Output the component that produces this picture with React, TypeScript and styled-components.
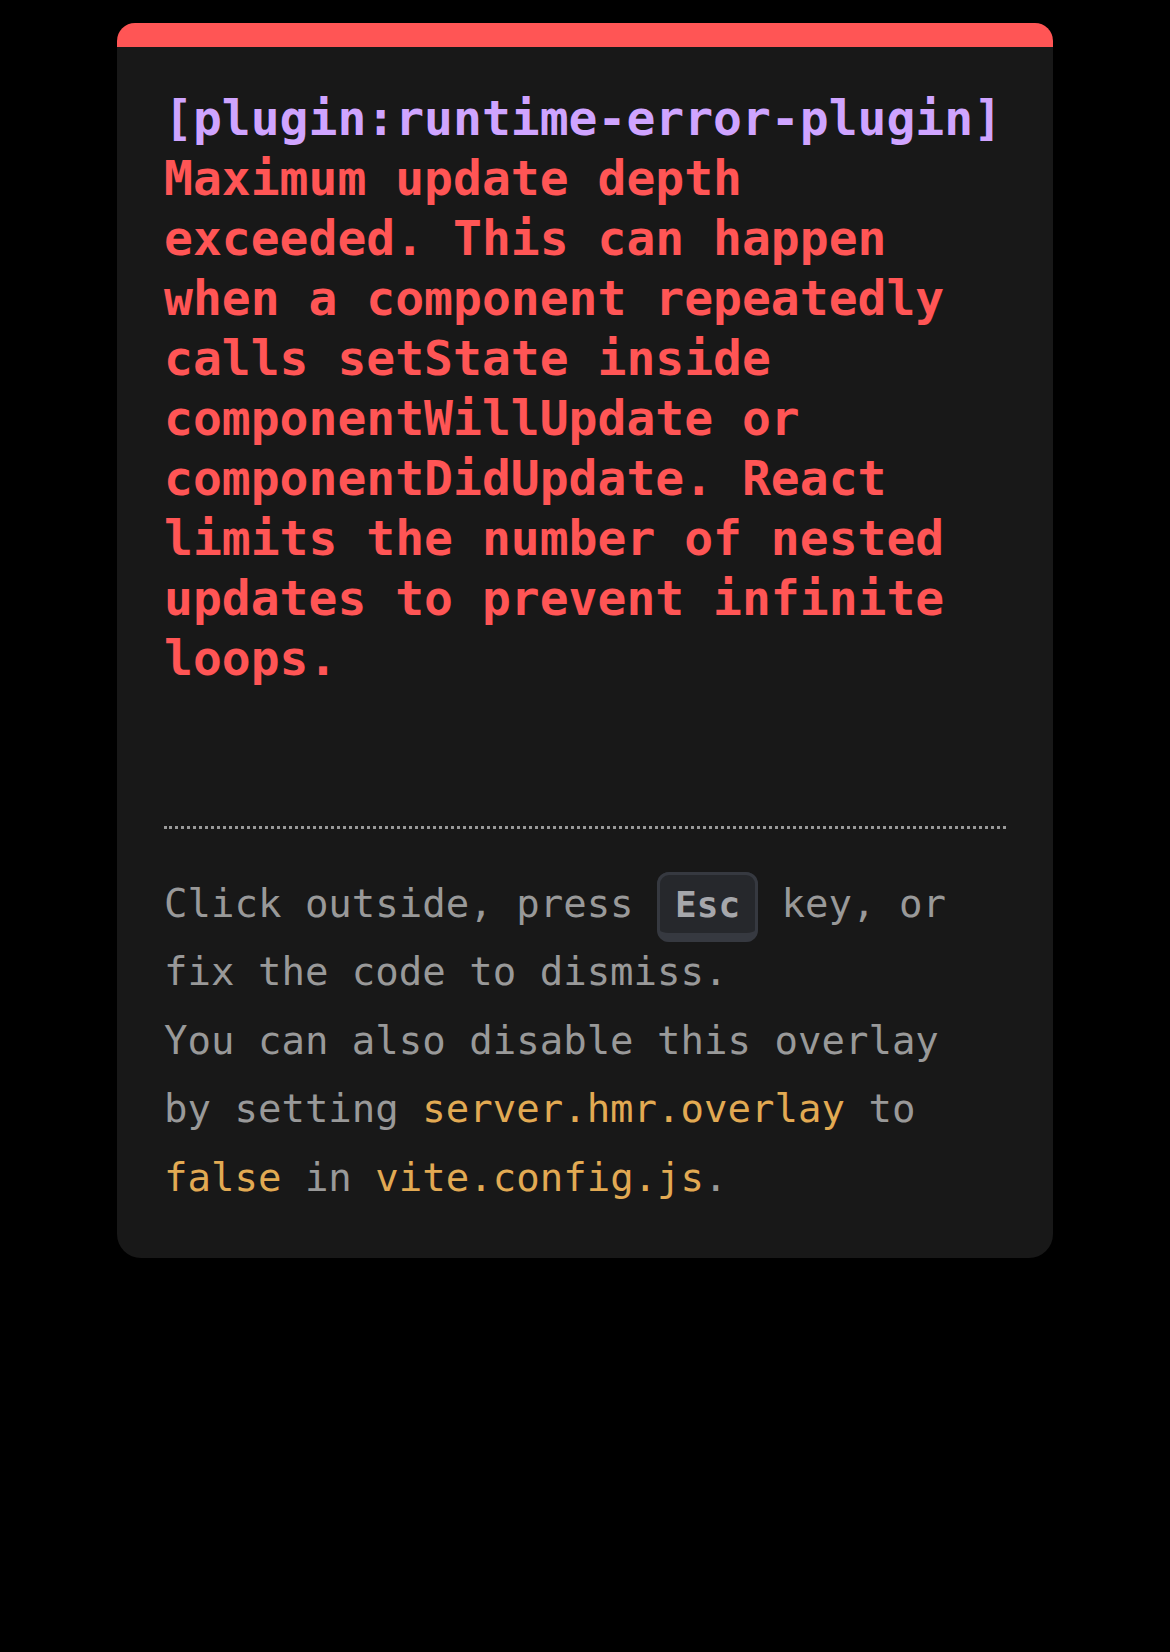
import styled, { createGlobalStyle } from 'styled-components';

const GlobalStyle = createGlobalStyle`
  html, body {
    margin: 0;
    padding: 0;
    background: #000;
  }
`;

const mono = `"DejaVu Sans Mono", "Liberation Mono", monospace`;

export default function App() {
  return (
    <>
      <GlobalStyle />
      <Backdrop>
        <Window>
          <Message>
            <Plugin>[plugin:runtime-error-plugin] </Plugin>
            <MessageBody>
              Maximum update depth exceeded. This can happen when a component repeatedly calls setState inside componentWillUpdate or componentDidUpdate. React limits the number of nested updates to prevent infinite loops.
            </MessageBody>
          </Message>
          <Tip>
            Click outside, press <Kbd>Esc</Kbd> key, or fix the code to dismiss.
            <br />
            You can also disable this overlay by setting <Code>server.hmr.overlay</Code> to{' '}
            <Code>false</Code> in <Code>vite.config.js</Code>.
          </Tip>
        </Window>
      </Backdrop>
    </>
  );
}

const Backdrop = styled.div`
  min-height: 1652px;
  background: #000;
  padding-top: 23px;
  box-sizing: border-box;
`;

const Window = styled.div`
  font-family: ${mono};
  line-height: 1.5;
  width: 936px;
  margin: 0 auto;
  box-sizing: border-box;
  padding: 41px 47px 46px;
  background: #181818;
  color: #d8d8d8;
  border-radius: 18px 18px 24px 24px;
  border-top: 24px solid #ff5555;
  box-shadow: 0 57px 114px rgba(0, 0, 0, 0.3), 0 45px 36px rgba(0, 0, 0, 0.22);
  overflow: hidden;
`;

const Message = styled.pre`
  font-family: ${mono};
  font-size: 48px;
  line-height: 60px;
  font-weight: 700;
  white-space: pre-wrap;
  margin: 0 0 138px;
`;

const Plugin = styled.span`
  color: #cfa4ff;
`;

const MessageBody = styled.span`
  color: #ff5555;
`;

const Tip = styled.div`
  font-size: 39px;
  color: #999;
  border-top: 3px dotted #999;
  padding-top: 41px;
  line-height: 68.4px;
`;

const Kbd = styled.kbd`
  font-family: ${mono};
  font-size: 36px;
  line-height: 54px;
  font-weight: 700;
  background-color: rgb(38, 40, 44);
  color: rgb(166, 167, 171);
  padding: 9px 15px 8px;
  border-radius: 12px;
  border-style: solid;
  border-color: rgb(54, 57, 64);
  border-width: 3px 3px 9px;
`;

const Code = styled.code`
  font-family: ${mono};
  font-size: 39px;
  color: #e2aa53;
`;
